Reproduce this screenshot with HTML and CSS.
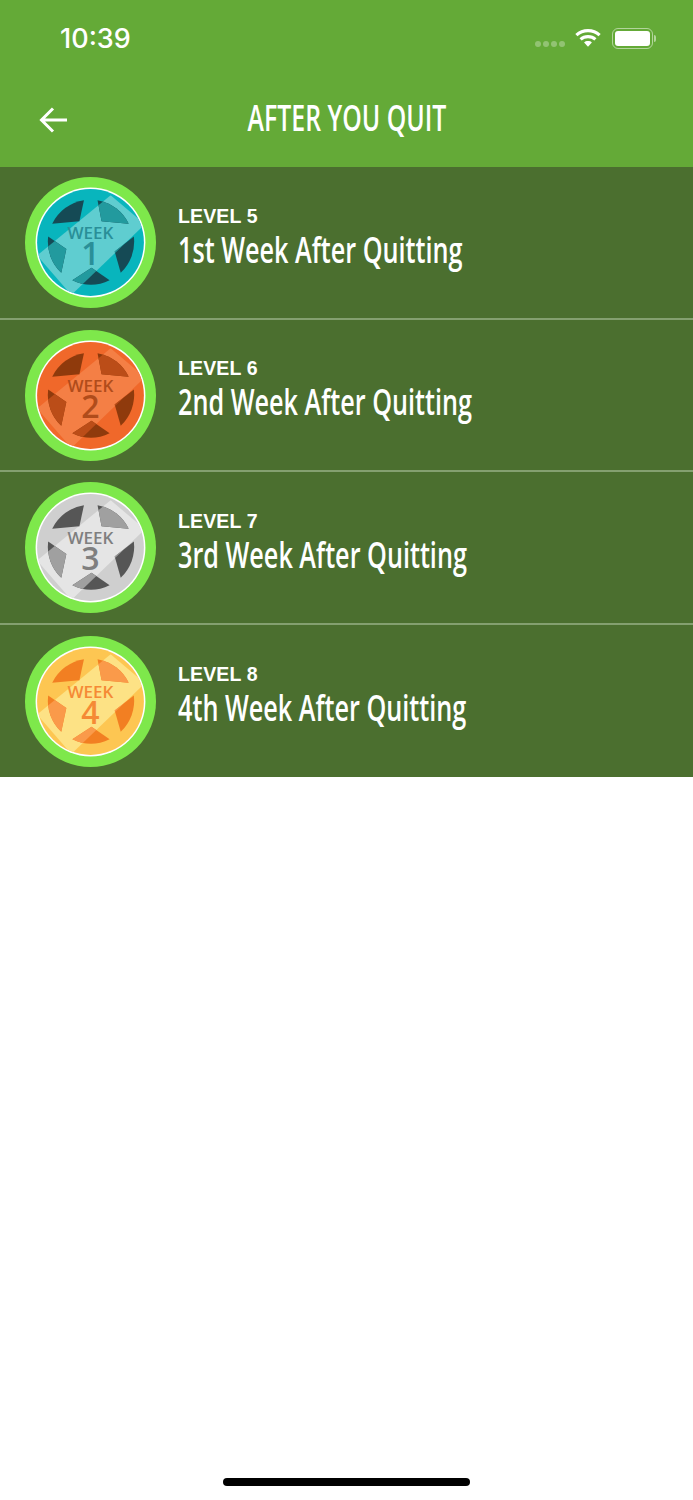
FILE: index.html
```html
<!DOCTYPE html>
<html lang="en">
<head>
    <meta charset="UTF-8">
    <meta name="viewport" content="width=device-width, initial-scale=1.0">
    <title>After You Quit</title>
    <link rel="stylesheet" href="styles.css">
</head>
<body>
    <svg class="defs" width="0" height="0">
        <defs>
            <clipPath id="band-clip">
                <polygon points="20,-47 -53,13 -19,52 54,-18"/>
            </clipPath>
            <symbol id="medal" viewBox="-65 -65 130 130">
                <circle r="65" fill="#7ee84b"/>
                <circle r="54.5" fill="#fff"/>
                <circle r="53" style="fill: var(--face)"/>
                <g clip-path="url(#band-clip)"><circle r="53" style="fill: var(--band)"/></g>
                <g style="fill: var(--dark)">
                    <path d="M-38,-18.5 A42.3,42.3 0 0 1 -6.5,-42 L-11,-21 Z"/>
                    <path d="M7,-42 A42.3,42.3 0 0 1 38,-18.5 L11,-21 Z"/>
                    <path d="M-42,-6 L-24,6.5 L-29,30 A42.3,42.3 0 0 1 -42,-6 Z"/>
                    <path d="M43,-6 L24,9 L30,30 A42.3,42.3 0 0 0 43,-6 Z"/>
                    <path d="M-18,37.5 L1,25 L19,37.5 A42.3,42.3 0 0 1 -18,37.5 Z"/>
                </g>
                <g clip-path="url(#band-clip)" style="fill: var(--dark-band)">
                    <path d="M-38,-18.5 A42.3,42.3 0 0 1 -6.5,-42 L-11,-21 Z"/>
                    <path d="M7,-42 A42.3,42.3 0 0 1 38,-18.5 L11,-21 Z"/>
                    <path d="M-42,-6 L-24,6.5 L-29,30 A42.3,42.3 0 0 1 -42,-6 Z"/>
                    <path d="M43,-6 L24,9 L30,30 A42.3,42.3 0 0 0 43,-6 Z"/>
                    <path d="M-18,37.5 L1,25 L19,37.5 A42.3,42.3 0 0 1 -18,37.5 Z"/>
                </g>
            </symbol>
        </defs>
    </svg>

    <header class="top">
        <div class="status">
            <span class="time">10:39</span>
            <div class="status-icons">
                <div class="signal"><i></i><i></i><i></i><i></i></div>
                <svg class="wifi" width="26" height="19" viewBox="0 0 28 20">
                    <path d="M1.5,7.5 C8.5,1 19.5,1 26.5,7.5" fill="none" stroke="#fff" stroke-width="3.4"/>
                    <path d="M6,12 C10.5,8 17.5,8 22,12" fill="none" stroke="#fff" stroke-width="3.4"/>
                    <path d="M9.8,15.3 C12,13.4 16,13.4 18.2,15.3 L14,20 Z" fill="#fff"/>
                </svg>
                <div class="battery"><div class="battery-fill"></div></div>
                <div class="battery-cap"></div>
            </div>
        </div>
        <div class="nav">
            <svg class="back" width="30" height="28" viewBox="0 0 30 28">
                <path d="M28,14 H3 M14,2.5 L2.5,14 L14,25.5" fill="none" stroke="#fff" stroke-width="3"/>
            </svg>
            <h1>AFTER YOU QUIT</h1>
        </div>
    </header>

    <ul class="levels">
        <li class="level week-1">
            <div class="badge">
                <svg class="badge-art"><use href="#medal"/></svg>
                <div class="badge-text"><span>WEEK</span><b>1</b></div>
            </div>
            <div class="level-text">
                <div class="level-no">LEVEL 5</div>
                <div class="level-name">1st Week After Quitting</div>
            </div>
        </li>
        <li class="level week-2">
            <div class="badge">
                <svg class="badge-art"><use href="#medal"/></svg>
                <div class="badge-text"><span>WEEK</span><b>2</b></div>
            </div>
            <div class="level-text">
                <div class="level-no">LEVEL 6</div>
                <div class="level-name">2nd Week After Quitting</div>
            </div>
        </li>
        <li class="level week-3">
            <div class="badge">
                <svg class="badge-art"><use href="#medal"/></svg>
                <div class="badge-text"><span>WEEK</span><b>3</b></div>
            </div>
            <div class="level-text">
                <div class="level-no">LEVEL 7</div>
                <div class="level-name">3rd Week After Quitting</div>
            </div>
        </li>
        <li class="level week-4">
            <div class="badge">
                <svg class="badge-art"><use href="#medal"/></svg>
                <div class="badge-text"><span>WEEK</span><b>4</b></div>
            </div>
            <div class="level-text">
                <div class="level-no">LEVEL 8</div>
                <div class="level-name">4th Week After Quitting</div>
            </div>
        </li>
    </ul>

    <div class="home-bar"></div>
</body>
</html>
```

FILE: styles.css
```css
body {
    margin: 0;
    height: 1500px;
    position: relative;
    overflow: hidden;
    background: #fff;
    font-family: "Liberation Sans", Arial, sans-serif;
    color: #fff;
}

.defs {
    position: absolute;
}

.top {
    height: 167px;
    background: #64aa37;
}

.status {
    height: 76px;
    display: flex;
    justify-content: space-between;
    align-items: center;
    box-sizing: border-box;
    padding: 0 37px 0 60px;
}

.time {
    font-family: Inter, sans-serif;
    font-size: 27px;
    font-weight: 500;
}

.status-icons {
    display: flex;
    align-items: center;
}

.signal {
    display: flex;
    gap: 2px;
    margin: 12px 10px 0 0;
}

.signal i {
    width: 6px;
    height: 6px;
    border-radius: 50%;
    background: rgba(255, 255, 255, 0.3);
}

.wifi {
    margin: -2px 11px 0 0;
}

.battery {
    box-sizing: border-box;
    width: 41px;
    height: 21px;
    padding: 2px;
    border: 1.5px solid rgba(255, 255, 255, 0.5);
    border-radius: 6px;
}

.battery-fill {
    height: 100%;
    background: #fff;
    border-radius: 3px;
}

.battery-cap {
    width: 2px;
    height: 7px;
    margin-left: 1px;
    background: rgba(255, 255, 255, 0.5);
    border-radius: 0 2px 2px 0;
}

.nav {
    height: 91px;
    position: relative;
    display: flex;
    align-items: center;
    justify-content: center;
}

.back {
    position: absolute;
    left: 39px;
    top: 30px;
}

.nav h1 {
    margin: -8px 0 0;
    font-family: "Open Sans", sans-serif;
    font-size: 36px;
    font-weight: 600;
    transform: scaleX(0.69);
}

.levels {
    margin: 0;
    padding: 0;
    list-style: none;
    background: #4b6f2f;
}

.level {
    box-sizing: border-box;
    height: 152.5px;
    display: flex;
    align-items: center;
    padding: 1px 0 0 25px;
    border-bottom: 2px solid #84a070;
}

.level:last-child {
    border-bottom: 0;
}

.badge {
    position: relative;
    width: 131px;
    height: 131px;
    flex: none;
}

.badge-art {
    display: block;
    width: 131px;
    height: 131px;
}

.badge-text {
    position: absolute;
    inset: 0;
    display: flex;
    flex-direction: column;
    align-items: center;
    padding-top: 48px;
    box-sizing: border-box;
    font-family: "Open Sans", sans-serif;
    color: var(--ink);
}

.badge-text span {
    font-size: 17px;
    font-weight: 600;
    line-height: 15px;
}

.badge-text b {
    font-size: 32px;
    font-weight: 600;
    line-height: 26px;
}

.level-text {
    margin-left: 22px;
    margin-top: -8px;
}

.level-no {
    font-size: 19.5px;
    font-weight: 700;
    line-height: 22px;
    letter-spacing: 0.15px;
}

.level-name {
    font-family: "Open Sans", sans-serif;
    font-size: 36px;
    font-weight: 600;
    line-height: 46px;
    white-space: nowrap;
    transform: scaleX(0.7);
    transform-origin: left center;
}

.week-1 {
    --face: #08b5bd;
    --band: #5fcdd0;
    --dark: #154a55;
    --dark-band: #229a9e;
    --ink: #2a8f98;
}

.week-2 {
    --face: #f0682a;
    --band: #f47f45;
    --dark: #8f3a0c;
    --dark-band: #bb4d18;
    --ink: #b04c1b;
}

.week-3 {
    --face: #cfcfcf;
    --band: #e5e5e5;
    --dark: #565656;
    --dark-band: #a0a0a0;
    --ink: #7f7f7f;
}

.week-4 {
    --face: #fdc652;
    --band: #fde285;
    --dark: #f27f22;
    --dark-band: #fa9a4a;
    --ink: #f58a35;
}

.home-bar {
    position: absolute;
    left: 223px;
    top: 1478px;
    width: 247px;
    height: 8px;
    border-radius: 4px;
    background: #000;
}
```
